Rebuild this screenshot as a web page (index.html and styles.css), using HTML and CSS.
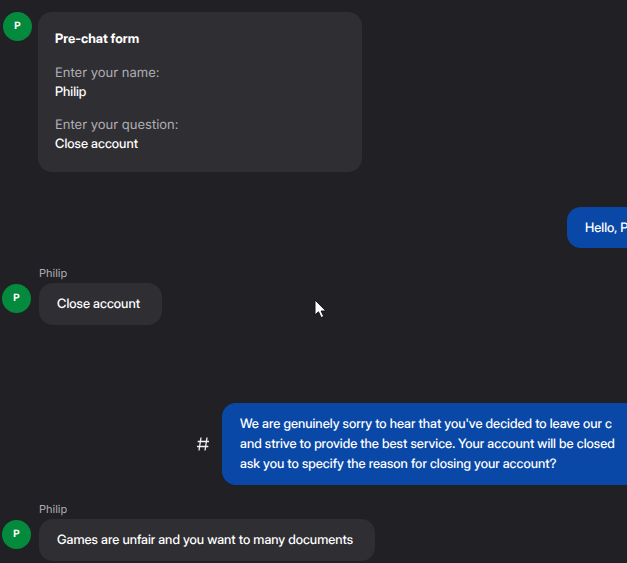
FILE: index.html
```
<!DOCTYPE html>
<html lang="en">
<head>
<meta charset="utf-8">
<title>Chat</title>
<link rel="stylesheet" href="styles.css">
</head>
<body>
<main class="chat">
  <section class="row form-row">
    <span class="avatar">P</span>
    <div class="card">
      <h2 class="card-title">Pre-chat form</h2>
      <dl class="fields">
        <div class="field"><dt>Enter your name:</dt><dd>Philip</dd></div>
        <div class="field"><dt>Enter your question:</dt><dd>Close account</dd></div>
      </dl>
    </div>
  </section>

  <section class="row agent greeting">
    <p class="bubble">Hello, P</p>
  </section>

  <section class="message first">
    <span class="author">Philip</span>
    <div class="row">
      <span class="avatar">P</span>
      <p class="bubble">Close account</p>
    </div>
  </section>

  <section class="row agent reply">
    <svg class="hash" viewBox="0 0 14 16" aria-hidden="true"><path d="M5 1.5 3 14.5M11 1.5 9 14.5M1.7 5.5H13M1 10.5h11.3"/></svg>
    <p class="bubble">We are genuinely sorry to hear that you've decided to leave our c<br>and strive to provide the best service. Your account will be closed<br>ask you to specify the reason for closing your account?</p>
  </section>

  <section class="message">
    <span class="author">Philip</span>
    <div class="row">
      <span class="avatar">P</span>
      <p class="bubble">Games are unfair and you want to many documents</p>
    </div>
  </section>
</main>
<svg class="cursor" viewBox="0 0 13 20" aria-hidden="true"><path d="M1 1v15l3.5-3.2 2.6 5.8 2.6-1.2-2.6-5.4h4.8z"/></svg>
</body>
</html>
```
FILE: styles.css
```
* { box-sizing: border-box; }

body {
  margin: 0;
  min-height: 100vh;
  overflow: hidden;
  background: #212024;
  color: #fff;
  font: 500 13px/20px "Inter Display", Inter, "Liberation Sans", sans-serif;
  text-rendering: geometricPrecision;
}

p, h2, dl, dd { margin: 0; }

.chat {
  display: flex;
  flex-direction: column;
  padding: 12px 0 0 2px;
}

.row {
  display: flex;
  align-items: flex-start;
  gap: 8px;
}

.avatar {
  flex: none;
  width: 29px;
  height: 29px;
  margin-top: 1px;
  border-radius: 50%;
  background: #048a3d;
  font-size: 10px;
  font-weight: 700;
  line-height: 29px;
  text-align: center;
}

.form-row { gap: 6px; padding-left: 1px; }
.form-row .avatar { margin-top: 0; }

.card {
  width: 324px;
  padding: 18px 17px;
  border-radius: 14px;
  background: #2f2e33;
  line-height: 19px;
}

.card-title {
  margin-bottom: 15px;
  font-size: 13px;
  font-weight: 700;
  line-height: 19px;
}

.fields {
  display: flex;
  flex-direction: column;
  gap: 14px;
}

.field dt {
  color: #b0afb5;
  font-family: Inter, "Liberation Sans", sans-serif;
  font-weight: 400;
}

.bubble {
  padding: 11px 22px 11px 18px;
  border-radius: 14px;
  background: #2f2e33;
  white-space: nowrap;
}

.agent .bubble {
  flex: 1;
  padding-right: 0;
  border-radius: 14px 0 0 14px;
  background: #0a48a8;
}

.greeting { margin-top: 35px; padding-left: 565px; }
.greeting .bubble { padding-bottom: 10px; }

.message.first { margin-top: 18px; margin-bottom: 78px; }

.author {
  display: block;
  margin-bottom: 2px;
  padding-left: 37px;
  color: #b0afb5;
  font-family: Inter, "Liberation Sans", sans-serif;
  font-size: 11px;
  font-weight: 400;
  line-height: 15px;
}

.reply {
  align-items: center;
  gap: 12px;
  margin-bottom: 17px;
  padding-left: 194px;
}

.hash {
  flex: none;
  width: 14px;
  height: 16px;
  fill: none;
  stroke: #f2f2f2;
  stroke-width: 1.3;
}

.cursor {
  position: absolute;
  top: 299px;
  left: 314px;
  width: 13px;
  height: 20px;
  fill: #fff;
  stroke: #151318;
  stroke-width: 1;
}
```
